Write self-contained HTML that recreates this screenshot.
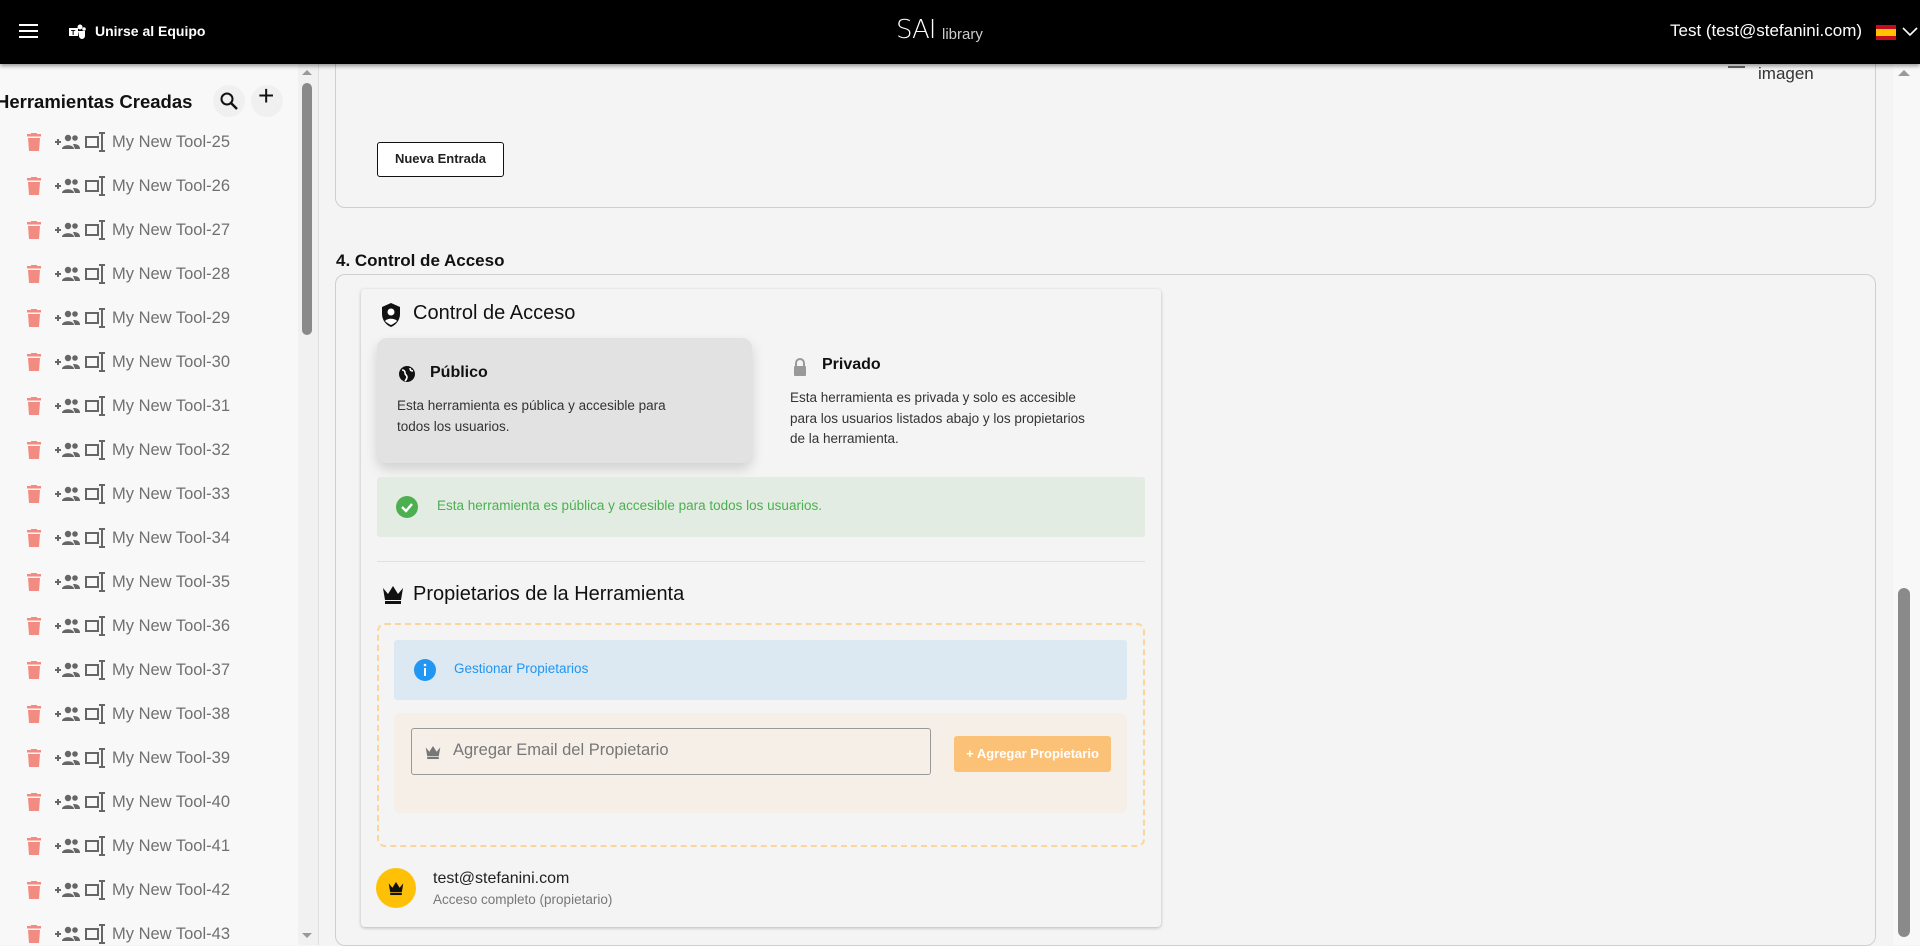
<!DOCTYPE html>
<html><head><meta charset="utf-8"><style>
*{box-sizing:border-box;margin:0;padding:0}
body{width:1920px;height:945px;overflow:hidden;background:#f4f4f4;font-family:"Liberation Sans",Arial,sans-serif;position:relative;color:#222}
.a{position:absolute}
#hdr{left:0;top:0;width:1920px;height:64px;background:#000;box-shadow:0 2px 4px rgba(0,0,0,.4);z-index:5}
#side{left:0;top:64px;width:318px;height:881px;background:#f8f8f8;overflow:hidden}
.item{position:absolute;left:0;height:30px;width:290px}
.item .t{position:absolute;left:112px;top:5px;font-size:16.5px;color:#707070}
.item .i1{position:absolute;left:26px;top:5px}
.item .i2{position:absolute;left:55px;top:6px}
.item .i3{position:absolute;left:85px;top:3px}
.card{background:#f4f4f4;border:1px solid #cfcfcf}
</style></head><body>
<svg width="0" height="0" style="position:absolute"><defs>
<symbol id="tr" viewBox="0 0 16 18"><rect x="1" y="1" width="14" height="2.5" fill="#f28b82"/><rect x="5" y="0" width="6" height="2" fill="#f28b82"/><path d="M2 5h12l-1 13H3z" fill="#f28b82"/></symbol>
<symbol id="pp" viewBox="0 0 27 16"><path d="M0 8h6M3 5v6" stroke="#666" stroke-width="2"/><circle cx="13" cy="4" r="3.2" fill="#666"/><circle cx="20" cy="4" r="2.8" fill="#666"/><path d="M7 15c0-5 12-5 12 0z" fill="#666"/><path d="M18 10c4 0 7 1 7 5h-5" fill="#666"/></symbol>
<symbol id="ed" viewBox="0 0 22 22"><rect x="1" y="6" width="12" height="10" stroke="#666" stroke-width="2" fill="none"/><path d="M17 2v18M14 2h6M14 20h6" stroke="#666" stroke-width="2"/></symbol>
</defs></svg>
<div id="hdr" class="a">
 <div class="a" style="left:19px;top:24px;width:19px;height:2px;background:#fff;box-shadow:0 6px 0 #fff,0 12px 0 #fff"></div>
 <svg class="a" style="left:68px;top:23px" width="18" height="18" viewBox="0 0 18 18"><rect x="1" y="5" width="9" height="8" fill="#fff"/><circle cx="12" cy="4" r="2.5" fill="#fff"/><circle cx="16" cy="6" r="1.8" fill="#fff"/><path d="M10 8h7v5a3 3 0 0 1-6 0z" fill="#fff"/><text x="3" y="12" font-size="7" fill="#000" font-weight="bold">T</text></svg>
 <div class="a" style="left:95px;top:23px;color:#fff;font-weight:bold;font-size:14px">Unirse al Equipo</div>
 <div class="a" style="left:896px;top:15px;color:#fff;font-size:26px;letter-spacing:-1px;font-family:'DejaVu Sans',sans-serif;font-weight:200">SAI</div>
 <div class="a" style="left:942px;top:26px;color:#ccc;font-size:15px">library</div>
 <div class="a" style="left:1670px;top:21px;color:#fff;font-size:17px">Test (test@stefanini.com)</div>
 <div class="a" style="left:1876px;top:25px;width:20px;height:15px;background:#c60b1e"><div style="margin-top:4px;height:7px;background:#ffc400"></div></div>
 <svg class="a" style="left:1902px;top:27px" width="16" height="10"><path d="M1 1l7 7 7-7" stroke="#fff" stroke-width="1.6" fill="none"/></svg>
</div>

<div id="side" class="a">
 <div class="a" style="left:-4px;top:27px;font-size:18.5px;font-weight:bold;color:#111">Herramientas Creadas</div>
 <div class="a" style="left:213px;top:21px;width:32px;height:32px;border-radius:50%;background:#f0f0f0"></div>
 <svg class="a" style="left:219px;top:27px" width="20" height="20" viewBox="0 0 20 20"><circle cx="8" cy="8" r="5.5" stroke="#111" stroke-width="2" fill="none"/><path d="M12 12l6 6" stroke="#111" stroke-width="2.4"/></svg>
 <div class="a" style="left:251px;top:21px;width:32px;height:32px;border-radius:50%;background:#f0f0f0"></div>
 <div class="a" style="left:258px;top:16px;font-size:28px;color:#111">+</div>
 <div class="a" style="left:298px;top:0;width:20px;height:881px;background:#f1f1f1"></div>
 <div class="a" style="left:302px;top:19px;width:10px;height:252px;background:#8a8a8a;border-radius:5px"></div>
 <div class="a" style="left:302px;top:6px;width:0;height:0;border:5px solid transparent;border-bottom-color:#999;border-top:0"></div>
 <div class="a" style="left:302px;top:869px;width:0;height:0;border:5px solid transparent;border-top-color:#999;border-bottom:0"></div>

 <div class="item" style="top:64px"><svg class="i1" width="16" height="18"><use href="#tr"/></svg><svg class="i2" width="27" height="16"><use href="#pp"/></svg><svg class="i3" width="22" height="22"><use href="#ed"/></svg><div class="t">My New Tool-25</div></div>
 <div class="item" style="top:108px"><svg class="i1" width="16" height="18"><use href="#tr"/></svg><svg class="i2" width="27" height="16"><use href="#pp"/></svg><svg class="i3" width="22" height="22"><use href="#ed"/></svg><div class="t">My New Tool-26</div></div>
 <div class="item" style="top:152px"><svg class="i1" width="16" height="18"><use href="#tr"/></svg><svg class="i2" width="27" height="16"><use href="#pp"/></svg><svg class="i3" width="22" height="22"><use href="#ed"/></svg><div class="t">My New Tool-27</div></div>
 <div class="item" style="top:196px"><svg class="i1" width="16" height="18"><use href="#tr"/></svg><svg class="i2" width="27" height="16"><use href="#pp"/></svg><svg class="i3" width="22" height="22"><use href="#ed"/></svg><div class="t">My New Tool-28</div></div>
 <div class="item" style="top:240px"><svg class="i1" width="16" height="18"><use href="#tr"/></svg><svg class="i2" width="27" height="16"><use href="#pp"/></svg><svg class="i3" width="22" height="22"><use href="#ed"/></svg><div class="t">My New Tool-29</div></div>
 <div class="item" style="top:284px"><svg class="i1" width="16" height="18"><use href="#tr"/></svg><svg class="i2" width="27" height="16"><use href="#pp"/></svg><svg class="i3" width="22" height="22"><use href="#ed"/></svg><div class="t">My New Tool-30</div></div>
 <div class="item" style="top:328px"><svg class="i1" width="16" height="18"><use href="#tr"/></svg><svg class="i2" width="27" height="16"><use href="#pp"/></svg><svg class="i3" width="22" height="22"><use href="#ed"/></svg><div class="t">My New Tool-31</div></div>
 <div class="item" style="top:372px"><svg class="i1" width="16" height="18"><use href="#tr"/></svg><svg class="i2" width="27" height="16"><use href="#pp"/></svg><svg class="i3" width="22" height="22"><use href="#ed"/></svg><div class="t">My New Tool-32</div></div>
 <div class="item" style="top:416px"><svg class="i1" width="16" height="18"><use href="#tr"/></svg><svg class="i2" width="27" height="16"><use href="#pp"/></svg><svg class="i3" width="22" height="22"><use href="#ed"/></svg><div class="t">My New Tool-33</div></div>
 <div class="item" style="top:460px"><svg class="i1" width="16" height="18"><use href="#tr"/></svg><svg class="i2" width="27" height="16"><use href="#pp"/></svg><svg class="i3" width="22" height="22"><use href="#ed"/></svg><div class="t">My New Tool-34</div></div>
 <div class="item" style="top:504px"><svg class="i1" width="16" height="18"><use href="#tr"/></svg><svg class="i2" width="27" height="16"><use href="#pp"/></svg><svg class="i3" width="22" height="22"><use href="#ed"/></svg><div class="t">My New Tool-35</div></div>
 <div class="item" style="top:548px"><svg class="i1" width="16" height="18"><use href="#tr"/></svg><svg class="i2" width="27" height="16"><use href="#pp"/></svg><svg class="i3" width="22" height="22"><use href="#ed"/></svg><div class="t">My New Tool-36</div></div>
 <div class="item" style="top:592px"><svg class="i1" width="16" height="18"><use href="#tr"/></svg><svg class="i2" width="27" height="16"><use href="#pp"/></svg><svg class="i3" width="22" height="22"><use href="#ed"/></svg><div class="t">My New Tool-37</div></div>
 <div class="item" style="top:636px"><svg class="i1" width="16" height="18"><use href="#tr"/></svg><svg class="i2" width="27" height="16"><use href="#pp"/></svg><svg class="i3" width="22" height="22"><use href="#ed"/></svg><div class="t">My New Tool-38</div></div>
 <div class="item" style="top:680px"><svg class="i1" width="16" height="18"><use href="#tr"/></svg><svg class="i2" width="27" height="16"><use href="#pp"/></svg><svg class="i3" width="22" height="22"><use href="#ed"/></svg><div class="t">My New Tool-39</div></div>
 <div class="item" style="top:724px"><svg class="i1" width="16" height="18"><use href="#tr"/></svg><svg class="i2" width="27" height="16"><use href="#pp"/></svg><svg class="i3" width="22" height="22"><use href="#ed"/></svg><div class="t">My New Tool-40</div></div>
 <div class="item" style="top:768px"><svg class="i1" width="16" height="18"><use href="#tr"/></svg><svg class="i2" width="27" height="16"><use href="#pp"/></svg><svg class="i3" width="22" height="22"><use href="#ed"/></svg><div class="t">My New Tool-41</div></div>
 <div class="item" style="top:812px"><svg class="i1" width="16" height="18"><use href="#tr"/></svg><svg class="i2" width="27" height="16"><use href="#pp"/></svg><svg class="i3" width="22" height="22"><use href="#ed"/></svg><div class="t">My New Tool-42</div></div>
 <div class="item" style="top:856px"><svg class="i1" width="16" height="18"><use href="#tr"/></svg><svg class="i2" width="27" height="16"><use href="#pp"/></svg><svg class="i3" width="22" height="22"><use href="#ed"/></svg><div class="t">My New Tool-43</div></div>
</div>

<!-- main -->
<div class="a" style="left:318px;top:64px;width:1px;height:881px;background:#e0e0e0"></div>
<div class="a card" style="left:335px;top:50px;width:1541px;height:158px;border-radius:0 0 10px 10px"></div>
<div class="a" style="left:1728px;top:66px;width:17px;height:2px;background:#666"></div>
<div class="a" style="left:1758px;top:64px;font-size:17px;color:#333">imagen</div>
<div class="a" style="left:377px;top:142px;width:127px;height:35px;background:#fff;border:1.5px solid #111;border-radius:3px;font-size:13px;font-weight:bold;text-align:center;line-height:32px">Nueva Entrada</div>
<div class="a" style="left:336px;top:251px;font-size:17px;font-weight:bold;color:#111">4. Control de Acceso</div>
<div class="a card" style="left:335px;top:274px;width:1541px;height:672px;border-radius:10px"></div>

<div class="a" style="left:361px;top:289px;width:800px;height:638px;background:#f4f4f4;border-radius:4px;box-shadow:0 1px 3px rgba(0,0,0,.25)"></div>
<svg class="a" style="left:380px;top:302px" width="22" height="26" viewBox="0 0 22 26"><path d="M11 1L2 5v7c0 6 4 11 9 13 5-2 9-7 9-13V5z" fill="#111"/><circle cx="11" cy="10" r="3.5" fill="#fff"/><path d="M5 19c2-3 10-3 12 0-2 2-4 3-6 4-2-1-4-2-6-4z" fill="#fff"/></svg>
<div class="a" style="left:413px;top:302px;font-size:20px;color:#111">Control de Acceso</div>

<div class="a" style="left:377px;top:338px;width:375px;height:125px;background:#e2e2e2;border-radius:10px;box-shadow:0 6px 12px rgba(0,0,0,.15)"></div>
<svg class="a" style="left:398px;top:365px" width="18" height="18" viewBox="0 0 18 18"><circle cx="9" cy="9" r="8" fill="#111"/><path d="M4 5c2 0 3 1 3 3s2 2 2 4-1 3-2 4M12 3c0 2 1 3 3 3" stroke="#fff" stroke-width="1.6" fill="none"/></svg>
<div class="a" style="left:430px;top:364px;font-size:16px;font-weight:bold;color:#111">Público</div>
<div class="a" style="left:397px;top:395px;font-size:13.5px;line-height:21px;color:#333;width:340px">Esta herramienta es pública y accesible para<br>todos los usuarios.</div>
<svg class="a" style="left:792px;top:357px" width="16" height="20" viewBox="0 0 16 20"><path d="M4 9V6a4 4 0 0 1 8 0v3" stroke="#999" stroke-width="2" fill="none"/><rect x="2" y="9" width="12" height="10" rx="1" fill="#999"/></svg>
<div class="a" style="left:822px;top:356px;font-size:16px;font-weight:bold;color:#111">Privado</div>
<div class="a" style="left:790px;top:388px;font-size:13.5px;line-height:20.5px;color:#333;width:360px">Esta herramienta es privada y solo es accesible<br>para los usuarios listados abajo y los propietarios<br>de la herramienta.</div>

<div class="a" style="left:377px;top:477px;width:768px;height:60px;background:#e3ece3;border-radius:3px"></div>
<svg class="a" style="left:395px;top:495px" width="24" height="24" viewBox="0 0 24 24"><circle cx="12" cy="12" r="11" fill="#4caf50"/><path d="M7 12l4 4 6-7" stroke="#fff" stroke-width="2.4" fill="none"/></svg>
<div class="a" style="left:437px;top:498px;font-size:13.5px;color:#4caf50">Esta herramienta es pública y accesible para todos los usuarios.</div>
<div class="a" style="left:377px;top:561px;width:768px;height:1px;background:#e0e0e0"></div>

<svg class="a" style="left:382px;top:585px" width="22" height="20" viewBox="0 0 22 20"><path d="M1 3l5 6 5-8 5 8 5-6-2 12H3z" fill="#111"/><rect x="3" y="16" width="16" height="3" fill="#111"/></svg>
<div class="a" style="left:413px;top:583px;font-size:20px;color:#111">Propietarios de la Herramienta</div>
<div class="a" style="left:377px;top:623px;width:768px;height:224px;border:2px dashed #fbd59a;border-radius:8px"></div>
<div class="a" style="left:394px;top:640px;width:733px;height:60px;background:#dce8f2;border-radius:3px"></div>
<svg class="a" style="left:413px;top:658px" width="24" height="24" viewBox="0 0 24 24"><circle cx="12" cy="12" r="11" fill="#2196f3"/><rect x="11" y="10" width="2" height="8" fill="#fff"/><circle cx="12" cy="7" r="1.3" fill="#fff"/></svg>
<div class="a" style="left:454px;top:661px;font-size:13.5px;color:#2196f3">Gestionar Propietarios</div>
<div class="a" style="left:394px;top:713px;width:733px;height:100px;background:#f6efe8;border-radius:6px"></div>
<div class="a" style="left:411px;top:728px;width:520px;height:47px;border:1px solid #999;border-radius:3px"></div>
<svg class="a" style="left:425px;top:745px" width="16" height="15" viewBox="0 0 22 20"><path d="M1 3l5 6 5-8 5 8 5-6-2 12H3z" fill="#777"/><rect x="3" y="16" width="16" height="3" fill="#777"/></svg>
<div class="a" style="left:453px;top:741px;font-size:16.5px;color:#777">Agregar Email del Propietario</div>
<div class="a" style="left:954px;top:736px;width:157px;height:36px;background:#fbc176;border-radius:3px;color:#fff;font-weight:bold;font-size:13px;line-height:36px;text-align:center">+ Agregar Propietario</div>

<div class="a" style="left:376px;top:868px;width:40px;height:40px;border-radius:50%;background:#ffc107"></div>
<svg class="a" style="left:388px;top:881px" width="16" height="15" viewBox="0 0 22 20"><path d="M1 3l5 6 5-8 5 8 5-6-2 12H3z" fill="#111"/><rect x="3" y="16" width="16" height="3" fill="#111"/></svg>
<div class="a" style="left:433px;top:870px;font-size:16px;color:#222">test@stefanini.com</div>
<div class="a" style="left:433px;top:892px;font-size:13.5px;color:#777">Acceso completo (propietario)</div>

<div class="a" style="left:1893px;top:64px;width:27px;height:881px;background:#f8f8f8"></div>
<div class="a" style="left:1898px;top:70px;width:0;height:0;border:6px solid transparent;border-bottom-color:#999;border-top:0"></div>
<div class="a" style="left:1898px;top:588px;width:12px;height:349px;background:#8a8a8a;border-radius:6px"></div>
</body></html>
